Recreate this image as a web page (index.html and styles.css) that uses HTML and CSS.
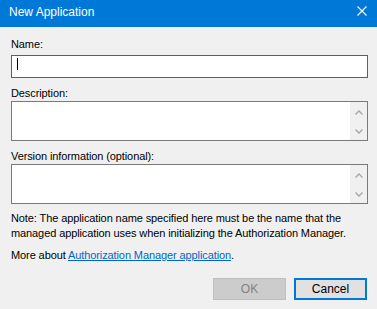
FILE: index.html
```html
<!DOCTYPE html>
<html lang="en">
<head>
    <meta charset="UTF-8">
    <title>New Application</title>
    <link rel="stylesheet" href="styles.css">
</head>
<body>
    <div class="dialog">
        <div class="titlebar">
            <span class="title">New Application</span>
            <svg class="close" width="10" height="10" viewBox="0 0 10 10">
                <path d="M0.5 0.5 L9.5 9.5 M9.5 0.5 L0.5 9.5" stroke="#fff" stroke-width="1.1" fill="none"/>
            </svg>
        </div>
        <div class="content">
            <div class="label label-first">Name:</div>
            <div class="input focused"><span class="caret"></span></div>

            <div class="label">Description:</div>
            <div class="input multi">
                <div class="text-area"></div>
                <div class="scrollbar">
                    <svg width="8" height="5" viewBox="0 0 8 5"><path d="M0.5 4.5 L4 1 L7.5 4.5" stroke="#a6a6a6" stroke-width="1.3" fill="none"/></svg>
                    <svg width="8" height="5" viewBox="0 0 8 5"><path d="M0.5 0.5 L4 4 L7.5 0.5" stroke="#a6a6a6" stroke-width="1.3" fill="none"/></svg>
                </div>
            </div>

            <div class="label">Version information (optional):</div>
            <div class="input multi">
                <div class="text-area"></div>
                <div class="scrollbar">
                    <svg width="8" height="5" viewBox="0 0 8 5"><path d="M0.5 4.5 L4 1 L7.5 4.5" stroke="#a6a6a6" stroke-width="1.3" fill="none"/></svg>
                    <svg width="8" height="5" viewBox="0 0 8 5"><path d="M0.5 0.5 L4 4 L7.5 0.5" stroke="#a6a6a6" stroke-width="1.3" fill="none"/></svg>
                </div>
            </div>

            <p class="note">Note: The application name specified here must be the name that the managed application uses when initializing the Authorization Manager.</p>
            <p class="more">More about <a href="#">Authorization Manager application</a>.</p>

            <div class="buttons">
                <button class="btn disabled" disabled>OK</button>
                <button class="btn default">Cancel</button>
            </div>
        </div>
    </div>
</body>
</html>
```

FILE: styles.css
```css
body {
    margin: 0;
    background-color: #f0f0f0;
    font-family: "Liberation Sans", Arial, sans-serif;
    font-size: 11px;
    line-height: 15px;
    letter-spacing: -0.1px;
    color: #000;
}
.dialog {
    width: 377px;
    height: 309px;
    background-color: #f0f0f0;
}
.titlebar {
    height: 27px;
    background-color: #0078d7;
    display: flex;
    align-items: center;
    justify-content: space-between;
    padding: 0 10px 0 9px;
    box-sizing: border-box;
}
.title {
    color: #fff;
    font-size: 12px;
    letter-spacing: 0;
    margin-top: -2px;
}
.close {
    display: block;
    margin-top: -5px;
}
.content {
    padding: 10px 9px 0 11px;
}
.label {
    margin-top: 8px;
}
.label-first {
    margin-top: 0;
    margin-bottom: 3px;
}
.input {
    background-color: #fff;
    border: 1px solid #7a7a7a;
    box-sizing: border-box;
}
.input.focused {
    height: 23px;
    border-color: #0078d7;
    padding: 2px 0 0 5px;
}
.caret {
    display: block;
    width: 1px;
    height: 12px;
    background-color: #000;
}
.input.multi {
    height: 40px;
    display: flex;
}
.text-area {
    flex: 1;
}
.scrollbar {
    width: 17px;
    background-color: #f0f0f0;
    display: flex;
    flex-direction: column;
    align-items: center;
    justify-content: space-between;
    padding: 8px 0 6px;
    box-sizing: border-box;
}
.scrollbar svg {
    display: block;
}
.note {
    margin: 7px 0 0;
}
.more {
    margin: 7px 0 0;
}
.more a {
    color: #0066cc;
    text-decoration: underline;
}
.buttons {
    display: flex;
    justify-content: flex-end;
    gap: 8px;
    margin-top: 15px;
    padding-right: 1px;
}
.btn {
    width: 73px;
    height: 22px;
    font-family: inherit;
    font-size: 12px;
    letter-spacing: 0;
    padding: 0;
    box-sizing: border-box;
    background-color: #e1e1e1;
    border: 1px solid #adadad;
    color: #000;
}
.btn.disabled {
    background-color: #cccccc;
    border-color: #bfbfbf;
    color: #838383;
}
.btn.default {
    border: 2px solid #0078d7;
}
```
